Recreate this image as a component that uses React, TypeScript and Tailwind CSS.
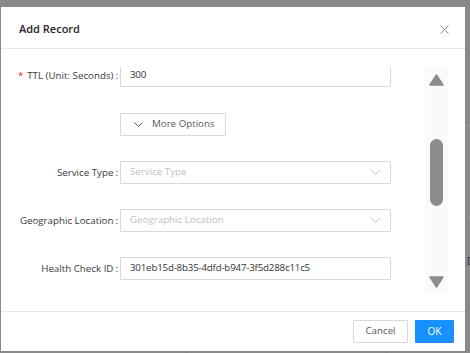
import { ReactNode } from "react";

function Chevron({ className }: { className?: string }) {
  return (
    <svg width="9" height="5" viewBox="0 0 9 5" className={className}>
      <path d="M0.5 0.5 L4.5 4.5 L8.5 0.5" fill="none" stroke="currentColor" strokeWidth="1" />
    </svg>
  );
}

function FormRow({ label, required, children }: { label: string; required?: boolean; children: ReactNode }) {
  return (
    <div className="flex h-[23px] items-center">
      <div className="flex w-[119px] shrink-0 items-center justify-end pt-[2px] pr-[2px] text-[9.75px] text-[#3a3a3a]">
        {required && <span className="mr-[4px] text-[#f5222d]">*</span>}
        <span>{label}</span>
        <span className="ml-[2px]">:</span>
      </div>
      {children}
    </div>
  );
}

function TextInput({ value, placeholder }: { value?: string; placeholder?: string }) {
  return (
    <div className="flex h-[23px] w-[271px] items-center rounded-[1px] border border-[#d9d9d9] pl-[9px] text-[9.75px] tracking-[-0.2px]">
      {value ? <span className="text-[#333]">{value}</span> : <span className="text-[#bfbfbf]">{placeholder}</span>}
    </div>
  );
}

function Select({ placeholder }: { placeholder: string }) {
  return (
    <div className="flex h-[23px] w-[271px] items-center justify-between rounded-[1px] border border-[#d9d9d9] pl-[9px] pr-[10px] text-[9.75px]">
      <span className="text-[#bfbfbf]">{placeholder}</span>
      <Chevron className="text-[#bfbfbf]" />
    </div>
  );
}

function ScrollBar() {
  return (
    <div className="flex w-[23px] shrink-0 flex-col items-center bg-[#fafafa] pt-[7px]">
      <svg width="15" height="12" viewBox="0 0 15 12">
        <path d="M7.5 1 L14 11 L1 11 Z" fill="#8c8c8c" stroke="#8c8c8c" strokeWidth="1.5" strokeLinejoin="round" />
      </svg>
      <div className="mt-[53px] h-[67px] w-[13px] rounded-full bg-[#8c8c8c]" />
      <div className="flex-1" />
      <svg width="15" height="12" viewBox="0 0 15 12" className="mb-[6px]">
        <path d="M1 1 L14 1 L7.5 11 Z" fill="#8c8c8c" stroke="#8c8c8c" strokeWidth="1.5" strokeLinejoin="round" />
      </svg>
    </div>
  );
}

export default function App() {
  return (
    <div className="relative h-[353px] w-[470px] overflow-hidden bg-[#898989] pl-[1px] pt-[7px] font-['Open_Sans',sans-serif]">
      {/* page content behind the overlay */}
      <div className="absolute left-[466px] top-[125px] h-px w-[4px] bg-[#999]" />
      <div className="absolute left-[466px] top-[217px] h-px w-[4px] bg-[#999]" />
      <div className="absolute left-[466px] top-[268px] h-px w-[4px] bg-[#999]" />
      <div className="absolute left-[467px] top-[256px] text-[10px] leading-none text-[#333]">D</div>
      <div className="absolute left-[186px] top-[350px] h-[3px] w-px bg-[#7c7c7c]" />
      <div className="absolute left-[386px] top-[350px] h-[3px] w-px bg-[#7c7c7c]" />

      <div className="relative flex h-[344px] w-[464px] flex-col bg-white">
        <div className="flex h-[42px] shrink-0 items-center justify-between border-b border-[#e8e8e8] pl-[18px] pr-[16px] pt-[3px]">
          <span className="text-[11px] font-semibold text-[#262626]">Add Record</span>
          <svg width="9" height="9" viewBox="0 0 9 9">
            <path d="M0.5 0.5 L8.5 8.5 M8.5 0.5 L0.5 8.5" stroke="#8c8c8c" strokeWidth="1" />
          </svg>
        </div>

        <div className="flex h-[262px] shrink-0 pb-[17px] pt-[18px] pr-[17px]">
          <div className="flex-1 overflow-hidden">
            <div className="-mt-[3px] flex flex-col gap-[25px]">
              <div className="mb-[1px]">
                <FormRow label="TTL (Unit: Seconds)" required>
                  <TextInput value="300" />
                </FormRow>
              </div>
              <div className="flex h-[23px] pl-[119px]">
                <div className="flex w-[106px] items-center gap-[9px] rounded-[1px] border border-[#d9d9d9] pl-[13px] text-[9.75px] text-[#595959]">
                  <Chevron className="text-[#595959]" />
                  <span>More Options</span>
                </div>
              </div>
              <FormRow label="Service Type">
                <Select placeholder="Service Type" />
              </FormRow>
              <FormRow label="Geographic Location">
                <Select placeholder="Geographic Location" />
              </FormRow>
              <FormRow label="Health Check ID">
                <TextInput value="301eb15d-8b35-4dfd-b947-3f5d288c11c5" />
              </FormRow>
            </div>
          </div>
          <ScrollBar />
        </div>

        <div className="flex flex-1 items-center justify-end gap-[7px] border-t border-[#e8e8e8] pr-[11px]">
          <button className="h-[23px] w-[55px] rounded-[1px] border border-[#d9d9d9] bg-white text-[9.75px] text-[#595959]">
            Cancel
          </button>
          <button className="h-[23px] w-[39px] rounded-[1px] bg-[#1890ff] text-[10px] text-white">OK</button>
        </div>
      </div>
    </div>
  );
}
